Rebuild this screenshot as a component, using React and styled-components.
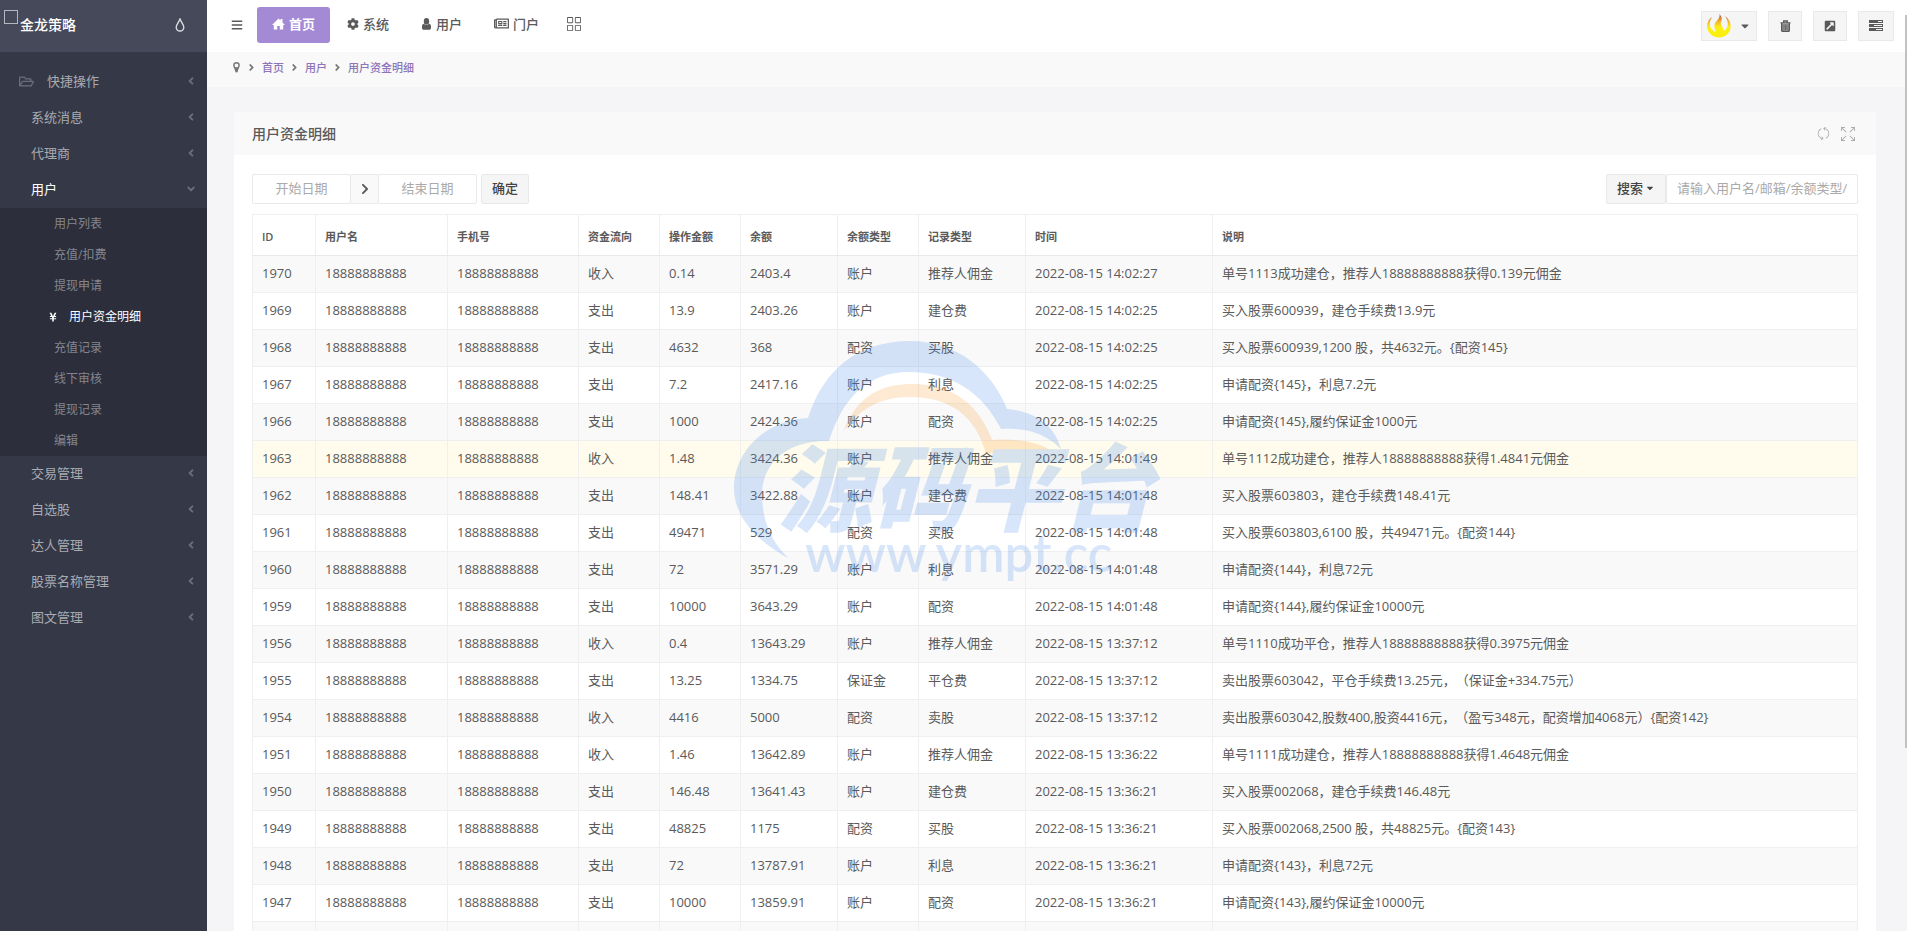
import styled, { createGlobalStyle, css } from "styled-components";
import { FaBars, FaCog, FaRegNewspaper, FaRegFolderOpen, FaAngleLeft, FaAngleDown, FaAngleRight, FaChevronRight, FaCaretDown, FaExternalLinkSquareAlt, FaYenSign } from "react-icons/fa";
import { SlGrid, SlRefresh, SlSizeFullscreen } from "react-icons/sl";

const colors = {
  sidebar: "#353847",
  sidebarTop: "#464959",
  submenu: "#2c2e3b",
  primary: "#a48ad4",
  text: "#5a5a5a",
  border: "#e9e9e9",
  soft: "#f9f9f9",
  page: "#f5f5f7",
};

const GlobalStyle = createGlobalStyle`
  * { box-sizing: border-box; }
  body {
    margin: 0;
    background: ${colors.page};
    color: ${colors.text};
    font-family: "Open Sans", "Noto Sans CJK SC", sans-serif;
    font-size: 13px;
    line-height: 20px;
    text-spacing-trim: space-all;
  }
  button, input { font: inherit; color: inherit; }
  a { color: inherit; text-decoration: none; }
  ul, ol { list-style: none; margin: 0; padding: 0; }
  svg { display: block; flex: none; }
`;

const Page = styled.div`
  display: flex;
  height: 100vh;
  overflow: hidden;
`;

const Sidebar = styled.aside`
  background: ${colors.sidebar};
  flex: 0 0 207px;
`;

const Brand = styled.div`
  align-items: center;
  background: ${colors.sidebarTop};
  color: #fff;
  display: flex;
  font-size: 14px;
  font-weight: 500;
  height: 52px;
  justify-content: space-between;
  padding: 0 22px 2px 20px;
  position: relative;

  svg { color: #dddee3; }
`;

const BrokenLogo = styled.span`
  border: 1px solid #b5b7c0;
  height: 14px;
  left: 4px;
  position: absolute;
  top: 10px;
  width: 14px;
`;

const Menu = styled.ul`
  padding-top: 12px;
`;

const MenuLink = styled.a`
  align-items: center;
  color: ${({ $active }) => ($active ? "#fff" : "#a9abb2")};
  display: flex;
  height: 36px;
  padding: 0 10px 2px ${({ $icon }) => ($icon ? 19 : 31)}px;

  > svg:first-child { margin-right: 13px; color: #6c6f7b; }
  > svg:last-child { margin-left: auto; color: #6c6f7b; }
`;

const Submenu = styled.ul`
  background: ${colors.submenu};
`;

const SubLink = styled.a`
  align-items: center;
  color: ${({ $active }) => ($active ? "#fff" : "#84868f")};
  display: flex;
  font-size: 12px;
  gap: 11px;
  height: 31px;
  padding-left: ${({ $active }) => ($active ? 48 : 54)}px;
`;

const Main = styled.div`
  display: flex;
  flex: 1;
  flex-direction: column;
  min-width: 0;
`;

const TopBar = styled.header`
  align-items: center;
  background: #fff;
  display: flex;
  flex: 0 0 52px;
  padding: 0 13px 3px 24px;
`;

const IconButton = styled.button`
  background: none;
  border: 0;
  color: ${({ $muted }) => ($muted ? "#aaa" : "inherit")};
  cursor: pointer;
  padding: 0;
`;

const Tabs = styled.nav`
  align-items: center;
  display: flex;
  flex: 1;
  gap: 2px;
  margin-left: 14px;
`;

const Tab = styled.a`
  align-items: center;
  border-radius: 3px;
  display: flex;
  font-weight: 500;
  gap: 4px;
  height: 36px;
  padding: 0 15px 2px;
  ${({ $active }) => $active && css`
    background: ${colors.primary};
    color: #fff;
    font-weight: 700;
  `}
`;

const AllButton = styled(IconButton)`
  padding: 0 11px 2px;
`;

const Tools = styled.div`
  display: flex;
  gap: 11px;
  padding-top: 2px;
`;

const ToolButton = styled.button`
  align-items: center;
  background: #f5f5f5;
  border: 1px solid ${colors.border};
  cursor: pointer;
  display: flex;
  gap: 8px;
  height: 30px;
  justify-content: center;
  min-width: ${({ $wide }) => ($wide ? 56 : 34)}px;
  padding: 0;

  &:last-child { min-width: 36px; }
`;

const Crumbs = styled.ol`
  align-items: center;
  background: ${colors.soft};
  color: #777;
  display: flex;
  flex: 0 0 35px;
  font-size: 11px;
  padding: 0 25px 4px;

  li { align-items: center; display: flex; }
  a { color: #8d75b8; font-weight: 500; }
  li + li svg { margin: 0 5px; }
`;

const Content = styled.main`
  flex: 1;
  min-height: 0;
  overflow: hidden;
  padding: 25px 31px 0 27px;
`;

const Panel = styled.section`
  background: #fff;
`;

const PanelHead = styled.header`
  align-items: center;
  background: ${colors.soft};
  display: flex;
  gap: 11px;
  height: 43px;
  padding: 0 21px 0 18px;

  h1 {
    flex: 1;
    font-size: 14px;
    font-weight: 500;
    margin: 0;
  }
`;

const PanelBody = styled.div`
  padding: 19px 18px;
`;

const Filters = styled.form`
  display: flex;
  justify-content: space-between;
  margin-bottom: 10px;
`;

const Group = styled.div`
  display: flex;
`;

const Field = styled.input`
  background: #fff;
  border: 1px solid ${colors.border};
  border-radius: 2px;
  height: 30px;
  padding: 0 10px 2px;
  text-align: ${({ $center }) => ($center ? "center" : "left")};
  width: ${({ $center }) => ($center ? 99 : 192)}px;

  &::placeholder { color: #aaa; opacity: 1; }
`;

const Addon = styled.span`
  align-items: center;
  background: ${colors.soft};
  border: 1px solid ${colors.border};
  border-width: 1px 0;
  display: flex;
  justify-content: center;
  width: 27px;
`;

const Button = styled.button`
  align-items: center;
  background: #f5f5f5;
  border: 1px solid ${colors.border};
  border-radius: 2px;
  color: #444;
  cursor: pointer;
  display: flex;
  font-weight: 500;
  gap: 2px;
  height: 30px;
  padding: 0 10px 2px;
`;

const Confirm = styled(Button)`
  margin-left: 4px;
`;

const Table = styled.table`
  border: 1px solid ${colors.border};
  border-collapse: collapse;
  table-layout: fixed;
  width: 100%;

  th, td {
    border: 1px solid #efefef;
    height: 37px;
    overflow: hidden;
    padding: 0 9px 2px;
    text-align: left;
    white-space: nowrap;
  }
  th {
    border-bottom-color: ${colors.border};
    font-size: 11px;
    font-weight: 600;
    height: 41px;
    padding: 4px 9px 0;
  }
  tbody tr:nth-child(odd) { background: ${colors.soft}; }
  tbody tr.current { background: #fffced; }
`;

const Watermark = styled.svg`
  left: 50%;
  margin-left: -222px;
  overflow: visible;
  pointer-events: none;
  position: fixed;
  top: 337px;
`;

const ScrollThumb = styled.span`
  background: #c1c1c1;
  bottom: 183px;
  position: fixed;
  right: 0;
  top: 15px;
  width: 2px;
`;

const submenu = ["用户列表", "充值/扣费", "提现申请", "用户资金明细", "充值记录", "线下审核", "提现记录", "编辑"];

const menu = [
  { label: "快捷操作", icon: true },
  { label: "系统消息" },
  { label: "代理商" },
  { label: "用户", items: submenu },
  { label: "交易管理" },
  { label: "自选股" },
  { label: "达人管理" },
  { label: "股票名称管理" },
  { label: "图文管理" },
];

const columns = [
  ["ID", 63],
  ["用户名", 132],
  ["手机号", 131],
  ["资金流向", 81],
  ["操作金额", 81],
  ["余额", 97],
  ["余额类型", 81],
  ["记录类型", 107],
  ["时间", 187],
  ["说明"],
];

const phone = "18888888888";

const rows = [
  [1970, "收入", "0.14", "2403.4", "账户", "推荐人佣金", "14:02:27", "单号1113成功建仓，推荐人18888888888获得0.139元佣金"],
  [1969, "支出", "13.9", "2403.26", "账户", "建仓费", "14:02:25", "买入股票600939，建仓手续费13.9元"],
  [1968, "支出", "4632", "368", "配资", "买股", "14:02:25", "买入股票600939,1200 股，共4632元。{配资145}"],
  [1967, "支出", "7.2", "2417.16", "账户", "利息", "14:02:25", "申请配资{145}，利息7.2元"],
  [1966, "支出", "1000", "2424.36", "账户", "配资", "14:02:25", "申请配资{145},履约保证金1000元"],
  [1963, "收入", "1.48", "3424.36", "账户", "推荐人佣金", "14:01:49", "单号1112成功建仓，推荐人18888888888获得1.4841元佣金"],
  [1962, "支出", "148.41", "3422.88", "账户", "建仓费", "14:01:48", "买入股票603803，建仓手续费148.41元"],
  [1961, "支出", "49471", "529", "配资", "买股", "14:01:48", "买入股票603803,6100 股，共49471元。{配资144}"],
  [1960, "支出", "72", "3571.29", "账户", "利息", "14:01:48", "申请配资{144}，利息72元"],
  [1959, "支出", "10000", "3643.29", "账户", "配资", "14:01:48", "申请配资{144},履约保证金10000元"],
  [1956, "收入", "0.4", "13643.29", "账户", "推荐人佣金", "13:37:12", "单号1110成功平仓，推荐人18888888888获得0.3975元佣金"],
  [1955, "支出", "13.25", "1334.75", "保证金", "平仓费", "13:37:12", "卖出股票603042，平仓手续费13.25元，（保证金+334.75元）"],
  [1954, "收入", "4416", "5000", "配资", "卖股", "13:37:12", "卖出股票603042,股数400,股资4416元，（盈亏348元，配资增加4068元）{配资142}"],
  [1951, "收入", "1.46", "13642.89", "账户", "推荐人佣金", "13:36:22", "单号1111成功建仓，推荐人18888888888获得1.4648元佣金"],
  [1950, "支出", "146.48", "13641.43", "账户", "建仓费", "13:36:21", "买入股票002068，建仓手续费146.48元"],
  [1949, "支出", "48825", "1175", "配资", "买股", "13:36:21", "买入股票002068,2500 股，共48825元。{配资143}"],
  [1948, "支出", "72", "13787.91", "账户", "利息", "13:36:21", "申请配资{143}，利息72元"],
  [1947, "支出", "10000", "13859.91", "账户", "配资", "13:36:21", "申请配资{143},履约保证金10000元"],
];

function Flame() {
  return (
    <svg width="24" height="24" viewBox="0 0 24 24">
      <defs>
        <linearGradient id="flame" x1="0" y1="0" x2="0" y2="1">
          <stop offset="0" stopColor="#a8452f" />
          <stop offset="0.28" stopColor="#f0a830" />
          <stop offset="0.55" stopColor="#fbef10" />
        </linearGradient>
      </defs>
      <path fill="url(#flame)" d="M5 3C-4 9 0 23 12 23.5C24 23 28 9 18 2C22 8 22 14 16.5 17C17 13 12 11 14.5 7C15.5 4 14 2 12.5 0C13.5 5 8 7 7.5 11C7.2 14 8 16 9 18C2.5 16 1 9 5 3Z" />
    </svg>
  );
}

function DropIcon() {
  return (
    <svg width="10" height="14" viewBox="0 0 10 14" fill="none" stroke="currentColor" strokeWidth="1.4">
      <path d="M5 1C4 4 1.2 6.5 1.2 9.2A3.8 3.8 0 0 0 8.8 9.2C8.8 6.5 6 4 5 1Z" />
    </svg>
  );
}

function HomeIcon() {
  return (
    <svg width="13" height="12" viewBox="0 0 13 12" fill="currentColor">
      <path d="M6.5 0.5L8.5 2.5V1H10.5V4.5L13 7H11.2V11.5H7.8V8H5.2V11.5H1.8V7H0Z" />
    </svg>
  );
}

function UserIcon() {
  return (
    <svg width="11" height="12" viewBox="0 0 11 12" fill="currentColor">
      <ellipse cx="5.5" cy="3.4" rx="2.7" ry="3.3" />
      <path d="M3 5.8C1.2 6.2 1 7 1 9.5C1 11 1.5 11.8 3 11.8H8C9.5 11.8 10 11 10 9.5C10 7 9.8 6.2 8 5.8C6.8 7.4 4.2 7.4 3 5.8Z" />
    </svg>
  );
}

function PinIcon() {
  return (
    <svg width="9" height="11" viewBox="0 0 9 11">
      <path fill="currentColor" fillRule="evenodd" d="M4.5 0A3.3 3.3 0 0 1 7.8 3.4C7.8 5 6.3 6.2 5.8 9.4C5.5 10.8 3.5 10.8 3.2 9.4C2.7 6.2 1.2 5 1.2 3.4A3.3 3.3 0 0 1 4.5 0ZM4.5 1.5A1.9 1.9 0 1 0 4.5 5.3A1.9 1.9 0 1 0 4.5 1.5Z" />
    </svg>
  );
}

function TrashIcon() {
  return (
    <svg width="11" height="12" viewBox="0 0 11 12" fill="none" stroke="currentColor">
      <path d="M0.5 2.8H10.5M3.7 2.5V1H7.3V2.5" strokeWidth="1.3" />
      <path d="M1.7 3V10.2C1.7 11 2 11.4 2.7 11.4H8.3C9 11.4 9.3 11 9.3 10.2V3" fill="#999" strokeWidth="1.4" />
      <path d="M4 4.5V10M5.5 4.5V10M7 4.5V10" strokeWidth="0.7" />
    </svg>
  );
}

function TasksIcon() {
  return (
    <svg width="14" height="11" viewBox="0 0 14 11">
      <path fill="currentColor" d="M0 0H14V3H0ZM0 4H14V7H0ZM0 8H14V11H0Z" />
      <path fill="#f5f5f5" d="M9 1H13V2H9ZM5 5H13V6H5ZM7 9H13V10H7Z" />
    </svg>
  );
}

function SideMenu() {
  return (
    <Menu>
      {menu.map(({ label, icon, items }) => (
        <li key={label}>
          <MenuLink href="#" $icon={icon} $active={Boolean(items)}>
            {icon && <FaRegFolderOpen size={15} />}
            <span>{label}</span>
            {items ? <FaAngleDown size={12} /> : <FaAngleLeft size={12} />}
          </MenuLink>
          {items && (
            <Submenu>
              {items.map((item) => (
                <li key={item}>
                  <SubLink href="#" $active={item === "用户资金明细"}>
                    {item === "用户资金明细" && <FaYenSign size={10} />}
                    {item}
                  </SubLink>
                </li>
              ))}
            </Submenu>
          )}
        </li>
      ))}
    </Menu>
  );
}

function CloudMark() {
  return (
    <Watermark width="444" height="260" viewBox="0 0 444 260">
      <g opacity="0.2">
        <path fill="#3a80eb" d="M56 221C25 204 2 180 2 151C2 114 34 83 76 81C91 34 124 5 176 4C225 3 260 34 275 72C300 74 322 86 329 112C311 95 293 91 269 92C251 56 220 35 177 35C134 35 110 63 97 104C57 103 31 124 30 157C30 182 38 203 56 221Z" />
        <path fill="#f7931e" d="M111 95C124 62 145 47 180 47C223 47 248 70 260 103C288 101 309 105 326 118C303 111 282 112 254 117C244 79 218 60 178 60C147 60 128 72 111 95Z" />
        <text x="46" y="187" fill="#3a80eb" fontSize="94" fontStyle="italic" fontWeight="900" fontFamily="Noto Sans CJK SC, sans-serif">源码平台</text>
        <text x="73" y="235" fill="#3a80eb" fontSize="51" fontWeight="600" fontFamily="Lato, sans-serif">www.ympt.cc</text>
      </g>
    </Watermark>
  );
}

function App() {
  return (
    <Page>
      <GlobalStyle />
      <Sidebar>
        <Brand>
          <BrokenLogo />
          <span>金龙策略</span>
          <DropIcon />
        </Brand>
        <SideMenu />
      </Sidebar>
      <Main>
        <TopBar>
          <IconButton aria-label="菜单"><FaBars size={12} /></IconButton>
          <Tabs>
            <Tab href="#" $active><HomeIcon />首页</Tab>
            <Tab href="#"><FaCog size={12} />系统</Tab>
            <Tab href="#"><UserIcon />用户</Tab>
            <Tab href="#"><FaRegNewspaper size={15} />门户</Tab>
            <AllButton aria-label="全部"><SlGrid size={14} /></AllButton>
          </Tabs>
          <Tools>
            <ToolButton $wide aria-label="账号"><Flame /><FaCaretDown size={12} /></ToolButton>
            <ToolButton aria-label="清空"><TrashIcon /></ToolButton>
            <ToolButton aria-label="打开"><FaExternalLinkSquareAlt size={12} /></ToolButton>
            <ToolButton aria-label="任务"><TasksIcon /></ToolButton>
          </Tools>
        </TopBar>
        <Crumbs>
          <li><PinIcon /></li>
          {["首页", "用户", "用户资金明细"].map((item) => (
            <li key={item}><FaAngleRight size={11} /><a href="#">{item}</a></li>
          ))}
        </Crumbs>
        <Content>
          <Panel>
            <PanelHead>
              <h1>用户资金明细</h1>
              <IconButton $muted aria-label="刷新"><SlRefresh size={13} /></IconButton>
              <IconButton $muted aria-label="全屏"><SlSizeFullscreen size={14} /></IconButton>
            </PanelHead>
            <PanelBody>
              <Filters>
                <Group>
                  <Field $center aria-label="开始日期" placeholder="开始日期" />
                  <Addon><FaChevronRight size={12} /></Addon>
                  <Field $center aria-label="结束日期" placeholder="结束日期" />
                  <Confirm type="button">确定</Confirm>
                </Group>
                <Group>
                  <Button type="button">搜索<FaCaretDown size={10} /></Button>
                  <Field aria-label="搜索" placeholder="请输入用户名/邮箱/余额类型/说明" />
                </Group>
              </Filters>
              <Table>
                <colgroup>
                  {columns.map(([name, width]) => <col key={name} width={width} />)}
                </colgroup>
                <thead>
                  <tr>{columns.map(([name]) => <th key={name}>{name}</th>)}</tr>
                </thead>
                <tbody>
                  {rows.map(([id, flow, amount, balance, account, type, time, note]) => (
                    <tr key={id} className={id === 1963 ? "current" : undefined}>
                      <td>{id}</td>
                      <td>{phone}</td>
                      <td>{phone}</td>
                      <td>{flow}</td>
                      <td>{amount}</td>
                      <td>{balance}</td>
                      <td>{account}</td>
                      <td>{type}</td>
                      <td>2022-08-15 {time}</td>
                      <td>{note}</td>
                    </tr>
                  ))}
                  <tr>{columns.map(([name]) => <td key={name} />)}</tr>
                </tbody>
              </Table>
            </PanelBody>
          </Panel>
        </Content>
      </Main>
      <CloudMark />
      <ScrollThumb />
    </Page>
  );
}

export default App;
